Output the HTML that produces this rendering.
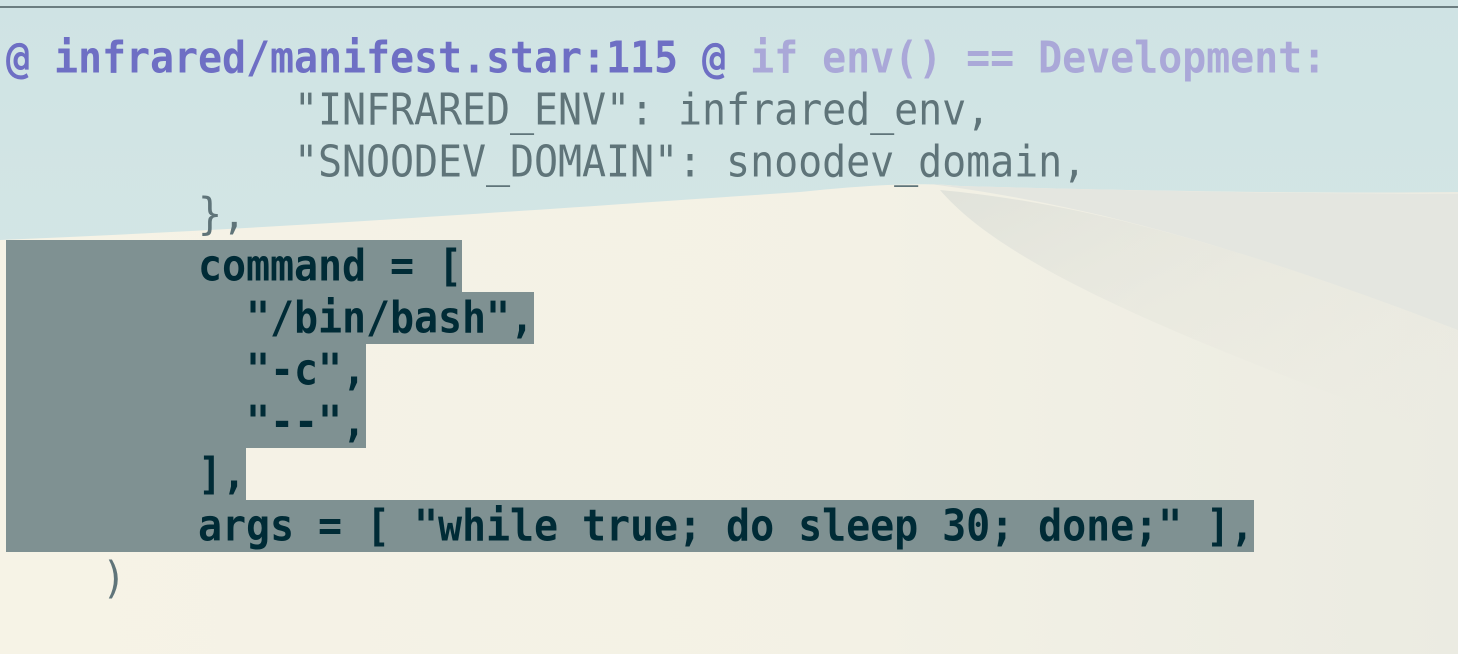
<!DOCTYPE html>
<html><head><meta charset="utf-8"><style>
html,body{margin:0;padding:0;width:1458px;height:654px;overflow:hidden;}
body{position:relative;background:#f3f0e3;}
svg.bg{position:absolute;left:0;top:0;}
.topline{position:absolute;left:0;top:6px;width:1458px;height:2px;background:#6b7d80;}
.code{position:absolute;left:6px;top:32px;font-family:"DejaVu Sans Mono","Liberation Mono",monospace;font-size:40px;line-height:52px;white-space:pre;color:#5f7479;letter-spacing:-0.08px;}
.l{height:52px;transform:scaleY(1.1);transform-origin:50% 50%;}
.h{position:absolute;left:6px;height:52px;background:#7f9192;}
.p{color:#6e6fc4;font-weight:bold;}
.pd{color:#aaa8d8;font-weight:bold;}
.d{color:#002b36;font-weight:bold;}
</style></head><body>
<svg class="bg" width="1458" height="654" viewBox="0 0 1458 654">
<defs>
<linearGradient id="sky" x1="0" y1="0" x2="0" y2="1"><stop offset="0" stop-color="#cfe3e4"/><stop offset="1" stop-color="#d9e9e6"/></linearGradient>
<linearGradient id="dune" x1="0" y1="0" x2="1" y2="0"><stop offset="0" stop-color="#f6f3e6"/><stop offset="0.6" stop-color="#f3f1e5"/><stop offset="1" stop-color="#ebebe2"/></linearGradient>
<linearGradient id="sh" x1="0" y1="0" x2="1" y2="1"><stop offset="0" stop-color="#dcdfd8" stop-opacity="0.8"/><stop offset="1" stop-color="#eceae0" stop-opacity="0"/></linearGradient>
</defs>
<rect width="1458" height="654" fill="url(#sky)"/>
<path d="M0,240 C300,228 600,205 800,192 C870,185 920,182 960,186 C1100,190 1300,194 1458,192 L1458,654 L0,654 Z" fill="url(#dune)"/>
<path d="M930,184 C1050,200 1200,230 1458,330 L1458,194 C1300,194 1100,190 960,186 Z" fill="#e4e6e0"/>
<path d="M940,190 C1000,260 1150,330 1458,440 L1458,330 C1200,230 1050,200 940,190 Z" fill="url(#sh)"/>
</svg>
<div class="topline"></div>
<div class="h" style="top:240px;width:456px"></div>
<div class="h" style="top:292px;width:528px"></div>
<div class="h" style="top:344px;width:360px;height:104px"></div>
<div class="h" style="top:448px;width:240px"></div>
<div class="h" style="top:500px;width:1248px"></div>
<div class="code"><div class="l"><span class="p">@ infrared/manifest.star:115 @</span> <span class="pd">if env() == Development:</span></div><div class="l">            "INFRARED_ENV": infrared_env,</div><div class="l">            "SNOODEV_DOMAIN": snoodev_domain,</div><div class="l">        },</div><div class="l d">        command = [</div><div class="l d">          "/bin/bash",</div><div class="l d">          "-c",</div><div class="l d">          "--",</div><div class="l d">        ],</div><div class="l d">        args = [ "while true; do sleep 30; done;" ],</div><div class="l">    )</div></div>
</body></html>
